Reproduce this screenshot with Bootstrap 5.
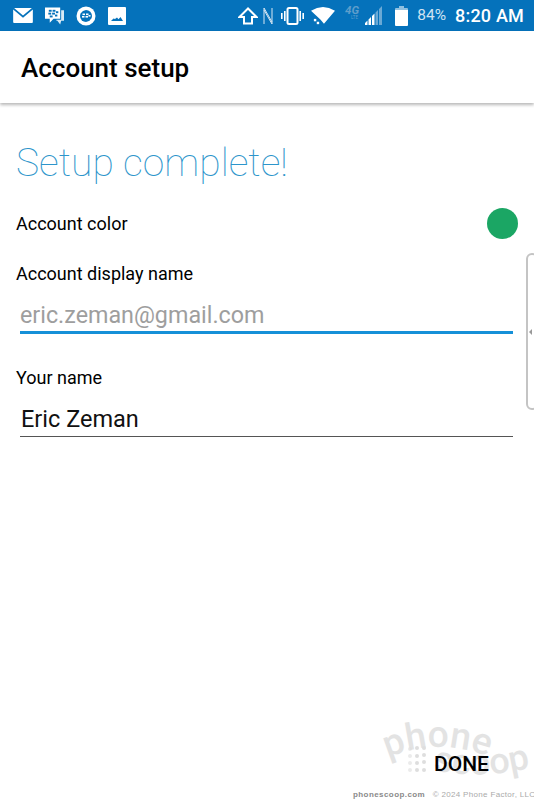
<!DOCTYPE html>
<html lang="en">
<head>
  <meta charset="UTF-8" />
  <title>Account setup</title>
  <link href="https://cdn.jsdelivr.net/npm/bootstrap@5.3.0/dist/css/bootstrap.min.css" rel="stylesheet" />
  <style>
    html, body { height: 800px; overflow: hidden; }
    body { font-family: Roboto, sans-serif; color: #000; background: #fff; position: relative; }
    .status-strip { height: 31px; background: #0572bb; color: #fff; padding: 0 10px 0 13px; }
    .status-strip svg { display: block; fill: #fff; }
    .status-left { gap: 12px; }
    .ic-nfc { margin-left: 5px; }
    .ic-vib { margin-left: 8px; }
    .ic-wifi { margin-left: 7px; }
    .ic-net { margin-left: 10px; margin-bottom: 9px; }
    .ic-sig { margin-left: 5px; }
    .ic-bat { margin-left: 11px; }
    .batt-pct { font-size: 15.500px; color: #cfe3f2; margin-left: 9px; }
    .clock { font-size: 18px; font-weight: 500; margin-left: 9px; letter-spacing: .2px; }
    .top-bar { height: 72px; padding: 4px 0 0 21px; box-shadow: 0 2px 3px rgba(0,0,0,.28); }
    .top-bar h1 { font-size: 26px; font-weight: 500; margin: 0; }
    .setup-body { padding: 37px 16px 0 16px; }
    .setup-title { font-size: 39px; font-weight: 100; color: #2d95cb; line-height: 47px; margin: 0; }
    .color-row { height: 32px; margin-top: 20px; font-size: 18px; }
    .color-dot { width: 31px; height: 31px; border-radius: 50%; background: #1ba664; }
    .fld-label { font-size: 18px; line-height: 22px; }
    .fld-one { margin-top: 24px; }
    .fld-two { margin-top: 33px; }
    .fld-input { display: block; width: 493px; margin-left: 4px; border: 0; outline: 0; background: transparent; font-family: inherit; color: #111; }
    .fld-input::placeholder { color: #9e9e9e; opacity: 1; }
    .fld-active { height: 38px; font-size: 23.300px; margin-top: 11px; padding: 2px 0 0; border-bottom: 3px solid #1590d8; }
    .fld-plain { height: 40px; font-size: 23.500px; margin-top: 8px; padding: 4px 0 0 1px; border-bottom: 1px solid #555; }
    .edge-tab { position: absolute; left: 526px; top: 253px; width: 12px; height: 157px; border: 2px solid #c4c4c4; border-radius: 8px; }
    .edge-tab::before { content: ""; position: absolute; left: 1px; top: 74px; border: 3px solid transparent; border-right-color: #999; border-left: 0; }
    .mark-art { position: absolute; left: 370px; top: 700px; fill: #e3e3e3; font-family: Roboto, sans-serif; font-weight: 500; }
    .done-btn { position: absolute; left: 434px; top: 752px; font-size: 21px; font-weight: 500; line-height: 24px; background: transparent; border: 0; padding: 0; color: #000; }
    .credit-line { position: absolute; left: 353px; top: 789px; font-size: 8px; line-height: 11px; white-space: nowrap; color: #aaa; font-family: "Liberation Sans", sans-serif; letter-spacing: .33px; }
    .credit-line b { margin-right: 5px; color: #8a8a8a; letter-spacing: .42px; }
  </style>
</head>
<body>

  <!-- status bar -->
  <div class="status-strip d-flex align-items-center justify-content-between">
    <div class="status-left d-flex align-items-center">
      <svg width="20" height="15" viewBox="0 0 21 16"><path d="M1 0h19l-9.500 8zM0 1.500v13.500a1 1 0 0 0 1 1h19a1 1 0 0 0 1-1V1.500l-10.500 9z"/></svg>
      <svg width="19" height="20" viewBox="0 0 20 20"><path d="M17 4h3v11h-3l-1 4-3-4h-1v-1h5z" opacity=".85"/><path d="M0 1h16v12H9l-4 4v-4H0z"/><g fill="#0572bb"><rect x="4" y="3.500" width="3" height="2"/><rect x="8" y="3.500" width="3" height="2"/><rect x="3.500" y="6.500" width="3" height="2"/><rect x="7.500" y="6.500" width="3" height="2"/><rect x="11.500" y="5" width="2.500" height="2"/><rect x="5" y="9.500" width="3" height="2"/><rect x="10.500" y="8.500" width="2.500" height="2"/></g></svg>
      <svg width="20" height="20" viewBox="0 0 20 20"><circle cx="10" cy="10" r="9.500"/><circle cx="10" cy="10" r="6" fill="#0572bb"/><path d="M4 4l6-3 1 3a6 6 0 0 0-6 3zM16 16l-6 3-1-3a6 6 0 0 0 6-3z"/><rect x="6.500" y="7.500" width="2.500" height="1.600"/><rect x="10" y="7.500" width="2.500" height="1.600"/><rect x="6" y="10" width="2.500" height="1.600"/><rect x="9.500" y="10" width="2.500" height="1.600"/><rect x="12.500" y="9" width="2" height="1.600"/></svg>
      <svg width="18" height="18" viewBox="0 0 18 18"><path fill-rule="evenodd" d="M1 0h16a1 1 0 0 1 1 1v16a1 1 0 0 1-1 1H1a1 1 0 0 1-1-1V1a1 1 0 0 1 1-1zM3 14h12l-2.500-4-2 2.200-1.500-1.700-2 1.500-1.500-.5z"/></svg>
    </div>
    <div class="d-flex align-items-center">
      <svg width="20" height="18" viewBox="0 0 20 18"><path d="M10 1.500L1.500 10H6v6.500h8V10h4.500z" fill="none" stroke="#fff" stroke-width="2"/></svg>
      <svg class="ic-nfc" width="10" height="18" viewBox="0 0 10 18"><path d="M1 17V3l8 14V1M1 3V1l8 14" fill="none" stroke="#d7e7f3" stroke-width="1"/></svg>
      <svg class="ic-vib" width="23" height="18" viewBox="0 0 23 18"><rect x="6.500" y="1" width="10" height="16" rx="1.500" fill="none" stroke="#fff" stroke-width="2"/><rect x="0" y="6" width="1.600" height="6"/><rect x="3" y="4" width="1.600" height="10"/><rect x="18.400" y="4" width="1.600" height="10"/><rect x="21.400" y="6" width="1.600" height="6"/></svg>
      <svg class="ic-wifi" width="24" height="20" viewBox="0 0 25 20"><path d="M0 4.500Q12.500-3 25 4.500L13.500 18 10 14z"/><rect x="3" y="13" width="2.500" height="2.500"/><rect x="6" y="16" width="2.500" height="2.500"/></svg>
      <svg class="ic-net" width="15" height="17" viewBox="0 0 15 17"><text x="0" y="11" font-size="11.500" font-weight="700" font-style="italic" fill="#5f9ecb" font-family="Roboto, sans-serif">4G</text><text x="6" y="16" font-size="4.500" fill="#5f9ecb" font-family="Roboto, sans-serif">LTE</text></svg>
      <svg class="ic-sig" width="19" height="19" viewBox="0 0 19 19"><path d="M0 19v-2l2.500-2.500V19zM3.500 19v-5.500L6 11v8z"/><path d="M7 19v-9l2.500-2.500V19z"/><path d="M10.500 19V6.500L13 4v15zM14 19V3l3-3v19z" fill="#6aa9d5"/></svg>
      <svg class="ic-bat" width="13" height="20" viewBox="0 0 13 20"><path d="M4 0h5v2h3a1 1 0 0 1 1 1v1H0V3a1 1 0 0 1 1-1h3z" fill="#8fc0e0"/><path d="M0 4h13v15a1 1 0 0 1-1 1H1a1 1 0 0 1-1-1z"/></svg>
      <span class="batt-pct">84%</span>
      <span class="clock">8:20 AM</span>
    </div>
  </div>

  <!-- toolbar -->
  <div class="top-bar d-flex align-items-center bg-white">
    <h1>Account setup</h1>
  </div>

  <div class="setup-body">
    <h2 class="setup-title">Setup complete!</h2>

    <div class="color-row d-flex align-items-center justify-content-between">
      <span>Account color</span>
      <span class="color-dot"></span>
    </div>

    <form>
      <div class="fld-one">
        <div class="fld-label">Account display name</div>
        <input class="fld-input fld-active" type="text" placeholder="eric.zeman@gmail.com" />
      </div>
      <div class="fld-two">
        <div class="fld-label">Your name</div>
        <input class="fld-input fld-plain" type="text" value="Eric Zeman" />
      </div>
    </form>
  </div>

  <div class="edge-tab"></div>

  <!-- watermark, drawn on two arcs like the original logo -->
  <svg class="mark-art" width="164" height="90" viewBox="370 700 164 90">
    <defs>
      <path id="arcTop" d="M388 758Q437 736 492 758"/>
      <path id="arcBottom" d="M433 770Q480 780 530 768"/>
    </defs>
    <text font-size="37"><textPath href="#arcTop">phone</textPath></text>
    <text font-size="36"><textPath href="#arcBottom">scoop</textPath></text>
    <g fill="#dedede">
      <circle cx="410" cy="749" r="2" opacity=".6"/><circle cx="417" cy="748" r="2"/><circle cx="424" cy="748" r="2"/>
      <circle cx="410" cy="756" r="2" opacity=".6"/><circle cx="417" cy="756" r="2"/><circle cx="424" cy="755" r="2"/>
      <circle cx="410" cy="763" r="2" opacity=".6"/><circle cx="417" cy="763" r="2"/><circle cx="424" cy="762" r="2"/>
      <circle cx="410" cy="770" r="2" opacity=".6"/><circle cx="417" cy="770" r="2"/><circle cx="424" cy="770" r="2"/>
    </g>
  </svg>

  <button type="button" class="done-btn">DONE</button>

  <div class="credit-line"><b>phonescoop.com</b> © 2024 Phone Factor, LLC</div>

  <script src="https://cdn.jsdelivr.net/npm/bootstrap@5.3.0/dist/js/bootstrap.bundle.min.js"></script>
</body>
</html>
